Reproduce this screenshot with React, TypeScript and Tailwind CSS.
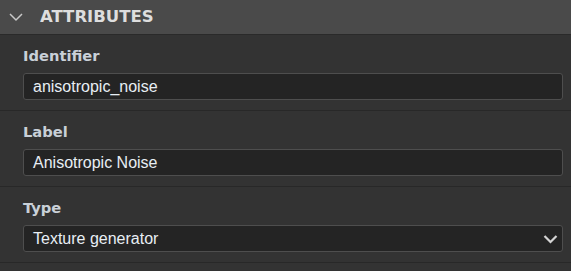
import React from 'react';

const fields = [
  { name: 'Identifier', value: 'anisotropic_noise', select: false },
  { name: 'Label', value: 'Anisotropic Noise', select: false },
  { name: 'Type', value: 'Texture generator', select: true },
];

const Field: React.FC<{ name: string; value: string; select: boolean }> = ({ name, value, select }) => (
  <div className="border-b border-[#282828] pl-[23px] pr-[8px] pt-[11px] pb-[10px]">
    <div className="mb-[7px] h-[20px] font-['DejaVu_Sans',sans-serif] text-[14.7px] font-bold leading-[20px] text-[#c9d0d8]">
      {name}
    </div>
    <div className="flex h-[27px] items-center rounded-[3px] border border-[#4e4e4e] bg-[#242424] pl-[9px] pr-[4px] text-[16px] text-[#e8eef4]">
      <span className="flex-1">{value}</span>
      {select && (
        <svg width="15" height="10" viewBox="0 0 15 10">
          <path d="M1.5 2 L7.5 8 L13.5 2" fill="none" stroke="#d4d4d4" strokeWidth="2.2" />
        </svg>
      )}
    </div>
  </div>
);

export default function App() {
  return (
    <div className="h-[271px] w-[571px] overflow-hidden bg-[#333333]" style={{ fontFamily: '"Liberation Sans", Arial, sans-serif' }}>
      <div className="flex h-[35px] items-center border-b border-[#2a2a2a] bg-[#4a4a4a]">
        <svg width="14" height="10" viewBox="0 0 14 10" className="ml-[9px] mr-[17px]">
          <path d="M1 2 L7 8 L13 2" fill="none" stroke="#c8c8c8" strokeWidth="1.5" />
        </svg>
        <span className="font-['DejaVu_Sans',sans-serif] text-[16.5px] font-bold text-[#dedede]">ATTRIBUTES</span>
      </div>
      {fields.map((f) => (
        <Field key={f.name} {...f} />
      ))}
    </div>
  );
}
